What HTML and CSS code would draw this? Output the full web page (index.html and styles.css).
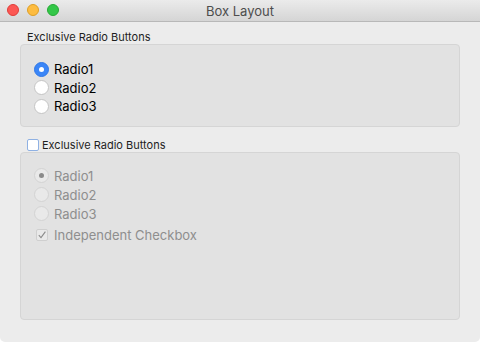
FILE: index.html
```html
<!DOCTYPE html>
<html lang="en">
<head>
    <meta charset="UTF-8">
    <title>Box Layout</title>
    <link rel="stylesheet" href="styles.css">
</head>
<body>
    <div class="window">
        <div class="titlebar">
            <div class="lights">
                <span class="light red"></span>
                <span class="light yellow"></span>
                <span class="light green"></span>
            </div>
            <div class="title">Box Layout</div>
        </div>

        <div class="content">
            <div class="group-title">Exclusive Radio Buttons</div>
            <div class="group-box first">
                <label class="option"><span class="radio checked"></span>Radio1</label>
                <label class="option"><span class="radio"></span>Radio2</label>
                <label class="option"><span class="radio"></span>Radio3</label>
            </div>

            <div class="group-title checkable"><span class="check-title"></span>Exclusive Radio Buttons</div>
            <div class="group-box second disabled">
                <label class="option"><span class="radio checked"></span>Radio1</label>
                <label class="option"><span class="radio"></span>Radio2</label>
                <label class="option"><span class="radio"></span>Radio3</label>
                <label class="option check-row">
                    <span class="checkbox">
                        <svg width="10" height="10" viewBox="0 0 10 10"><path d="M1.8 5.2 L4 7.6 L8.4 1.6" fill="none" stroke="#8a8a8a" stroke-width="1.1"/></svg>
                    </span>Independent Checkbox
                </label>
            </div>
        </div>
    </div>
</body>
</html>
```

FILE: styles.css
```css
* {
    margin: 0;
    padding: 0;
    box-sizing: border-box;
}

body {
    background: #ffffff;
    font-family: Inter, 'Liberation Sans', sans-serif;
}

.window {
    width: 480px;
    height: 342px;
    background: #ececec;
    border-radius: 0 0 5px 5px;
    display: flex;
    flex-direction: column;
}

.titlebar {
    height: 22px;
    background: linear-gradient(#ebebeb, #d5d5d5);
    border-bottom: 1px solid #b8b8b8;
    position: relative;
    display: flex;
    align-items: center;
    justify-content: center;
}

.lights {
    position: absolute;
    left: 7px;
    top: 4px;
    display: flex;
    gap: 8px;
}

.light {
    width: 12px;
    height: 12px;
    border-radius: 50%;
}

.red { background: #fc5753; border: 1px solid #df3d39; }
.yellow { background: #fdbc40; border: 1px solid #de9f25; }
.green { background: #33c748; border: 1px solid #27aa35; }

.title {
    font-size: 13px;
    color: #4d4d4d;
}

.content {
    padding: 8px 20px 0;
    display: flex;
    flex-direction: column;
}

.group-title {
    height: 14px;
    font-size: 11px;
    line-height: 14px;
    color: #1e1e1e;
    padding-left: 7px;
    display: flex;
    align-items: center;
}

.group-title.checkable {
    margin-top: 11px;
}

.check-title {
    width: 12px;
    height: 12px;
    background: #fff;
    border: 1px solid #8fb1e3;
    border-radius: 2px;
    margin-right: 3px;
}

.group-box {
    background: #e2e2e2;
    border: 1px solid #d5d5d5;
    border-radius: 4px;
    display: flex;
    flex-direction: column;
    padding-left: 13px;
}

.group-box.first {
    height: 83px;
    padding-top: 15px;
}

.group-box.second {
    height: 168px;
    padding-top: 13px;
}

.option {
    display: flex;
    align-items: center;
    height: 18.5px;
    font-size: 13px;
    color: #000;
}

.second .option {
    height: 19px;
}

.radio {
    width: 15px;
    height: 15px;
    border-radius: 50%;
    background: #fff;
    border: 1px solid #c4c4c4;
    margin-right: 5px;
    display: flex;
    align-items: center;
    justify-content: center;
}

.radio.checked {
    background: #3b86f7;
    border-color: #2f78e8;
}

.radio.checked::after {
    content: "";
    width: 5px;
    height: 5px;
    border-radius: 50%;
    background: #fff;
}

.disabled .option {
    color: #8e8e8e;
}

.disabled .radio {
    background: #e9e9e9;
    border-color: #d3d3d3;
}

.disabled .radio.checked::after {
    background: #8a8a8a;
}

.check-row {
    margin-top: 2px;
}

.checkbox {
    width: 12px;
    height: 12px;
    margin: 0 6px 0 2px;
    background: #e9e9e9;
    border: 1px solid #cfcfcf;
    border-radius: 2px;
    display: flex;
    align-items: center;
    justify-content: center;
}
```
